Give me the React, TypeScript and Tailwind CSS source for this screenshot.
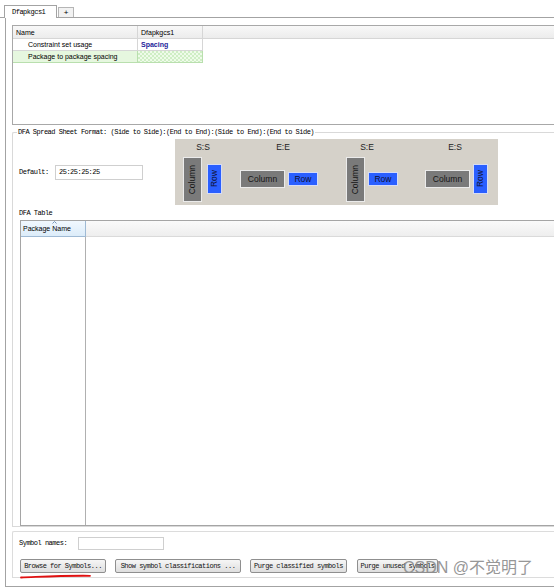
import React from "react";

const MONO = "font-['Liberation_Mono',monospace] text-[7px] tracking-[-0.5px]";
const SANS = "font-['Liberation_Sans',Arial,sans-serif]";

function ColumnBox({ vertical, className }: { vertical?: boolean; className: string }) {
  return (
    <div
      className={`absolute flex items-center justify-center bg-[#7a7a7a] border border-[#ebebeb] text-[#151515] text-[8.5px] leading-none ${SANS} ${className}`}
    >
      <span className={vertical ? "[writing-mode:vertical-rl] rotate-180" : ""}>Column</span>
    </div>
  );
}

function RowBox({ vertical, className }: { vertical?: boolean; className: string }) {
  return (
    <div
      className={`absolute flex items-center justify-center bg-[#2a5fff] border border-[#d6dcf5] text-[#101030] text-[8.5px] leading-none ${SANS} ${className}`}
    >
      <span className={vertical ? "[writing-mode:vertical-rl] rotate-180" : ""}>Row</span>
    </div>
  );
}

function Label({ text, className }: { text: string; className: string }) {
  return (
    <div className={`absolute top-[3px] w-[40px] text-center text-[8.5px] leading-[10px] text-[#222] ${SANS} ${className}`}>
      {text}
    </div>
  );
}

function Diagram() {
  return (
    <div className="relative w-[323px] h-[66px] bg-[#d5d1c9] shrink-0">
      <Label text="S:S" className="left-[8px]" />
      <Label text="E:E" className="left-[88px]" />
      <Label text="S:E" className="left-[172px]" />
      <Label text="E:S" className="left-[260px]" />
      <ColumnBox vertical className="left-[8px] top-[18px] w-[19px] h-[45px]" />
      <RowBox vertical className="left-[32px] top-[25px] w-[15px] h-[30px]" />
      <ColumnBox className="left-[65px] top-[31px] w-[45px] h-[18px]" />
      <RowBox className="left-[113px] top-[33px] w-[30px] h-[14px]" />
      <ColumnBox vertical className="left-[171px] top-[18px] w-[19px] h-[45px]" />
      <RowBox className="left-[193px] top-[33px] w-[30px] h-[14px]" />
      <ColumnBox className="left-[250px] top-[31px] w-[45px] h-[18px]" />
      <RowBox vertical className="left-[298px] top-[25px] w-[15px] h-[30px]" />
    </div>
  );
}

function Btn({ text, className }: { text: string; className: string }) {
  return (
    <div
      className={`h-[14px] flex items-center justify-center rounded-[2px] border border-[#8f8f8f] bg-gradient-to-b from-[#f6f6f6] to-[#dedede] leading-none text-[#111] ${MONO} ${className}`}
    >
      {text}
    </div>
  );
}

export default function App() {
  return (
    <div className="relative w-[554px] h-[587px] overflow-hidden bg-white text-black">
      {/* tab bar */}
      <div className="flex items-end h-[18px] pl-[4px] border-b border-[#a3a3a3]">
        <div
          className={`h-[13px] w-[53px] -mb-px border border-b-0 border-[#a3a3a3] bg-white flex items-center pl-[7px] leading-none ${MONO}`}
        >
          Dfapkgcs1
        </div>
        <div
          className={`ml-[1px] h-[10px] w-[16px] border border-b-0 border-[#b5b5b5] bg-[#f2f2f2] flex items-center justify-center text-[8px] leading-none ${SANS}`}
        >
          +
        </div>
      </div>

      {/* main frame */}
      <div className="ml-[5px] h-[569px] w-[560px] border-l border-b border-[#a3a3a3] flex flex-col pl-[6px] pt-[7px]">
        {/* property table box */}
        <div className={`h-[100px] border border-[#a8a8a8] flex flex-col text-[7px] leading-none ${SANS}`}>
          <div className="flex h-[13px] bg-gradient-to-b from-[#f8f8f8] to-[#ececec] border-b border-[#d6d6d6]">
            <div className="w-[125px] border-r border-[#d6d6d6] flex items-center pl-[3px]">Name</div>
            <div className="w-[65px] border-r border-[#d6d6d6] flex items-center pl-[3px]">Dfapkgcs1</div>
            <div className="flex-1" />
          </div>
          <div className="flex h-[12px]">
            <div className="w-[125px] border-r border-b border-[#d6d6d6] flex items-center pl-[15px]">Constraint set usage</div>
            <div className="w-[65px] border-r border-b border-[#d6d6d6] flex items-center pl-[3px] font-bold text-[#23239a]">
              Spacing
            </div>
          </div>
          <div className="flex h-[12px]">
            <div className="w-[125px] border-r border-b border-[#b9dfae] bg-[#e6f7df] flex items-center pl-[15px]">
              Package to package spacing
            </div>
            <div className="w-[65px] border-r border-b border-[#b9dfae] bg-[#e8f8e2] bg-[image:repeating-conic-gradient(#cfeec5_0%_25%,#eefbe9_0%_50%)] bg-[length:4px_4px]" />
          </div>
        </div>

        {/* DFA group box */}
        <div className="relative mt-[7px] h-[395px] border-l border-t border-b border-[#d9d9d9] rounded-tl-[2px] flex flex-col pt-[6px]">
          <div className={`absolute left-[4px] -top-[5px] bg-white px-[1px] leading-[9px] ${MONO}`}>
            DFA Spread Sheet Format: (Side to Side):(End to End):(Side to End):(End to Side)
          </div>
          <div className="flex items-center pl-[6px]">
            <div className={`w-[36px] leading-none ${MONO}`}>Default:</div>
            <div
              className={`w-[88px] h-[15px] border border-[#cfcfcf] flex items-center pl-[3px] leading-none ${MONO}`}
            >
              25:25:25:25
            </div>
            <div className="ml-[32px]">
              <Diagram />
            </div>
          </div>
          <div className={`mt-[4px] pl-[6px] h-[8px] leading-[8px] ${MONO}`}>DFA Table</div>
          <div className="mt-[3px] ml-[7px] h-[306px] border border-[#a5a5a5] flex flex-col">
            <div className={`flex h-[16px] text-[7px] leading-none ${SANS}`}>
              <div className="relative w-[65px] border-r border-b border-[#9fbad4] bg-gradient-to-b from-[#f1f8fe] to-[#dcecf9] flex items-center pl-[2px]">
                Package Name
                <svg className="absolute left-[31px] top-[0px]" width="5" height="3" viewBox="0 0 5 3">
                  <path d="M0.5 2.5 L2.5 0.5 L4.5 2.5" fill="none" stroke="#5a7fa8" strokeWidth="0.8" />
                </svg>
              </div>
              <div className="flex-1 border-b border-[#dadada] bg-gradient-to-b from-[#fafafa] to-[#eeeeee]" />
            </div>
            <div className="flex-1 flex">
              <div className="w-[65px] border-r border-[#b0b0b0]" />
              <div className="flex-1" />
            </div>
          </div>
        </div>

        {/* bottom group box */}
        <div className="mt-[4px] h-[47px] border-l border-t border-b border-[#dcdcdc] rounded-tl-[2px] flex flex-col pt-[5px]">
          <div className="flex items-center pl-[6px]">
            <div className={`w-[59px] leading-none ${MONO}`}>Symbol names:</div>
            <div className="w-[86px] h-[13px] border border-[#cfcfcf]" />
          </div>
          <div className="flex mt-[9px] pl-[7px]">
            <Btn text="Browse for Symbols..." className="w-[86px]" />
            <Btn text="Show symbol classifications ..." className="ml-[9px] w-[126px]" />
            <Btn text="Purge classified symbols" className="ml-[9px] w-[97px]" />
            <Btn text="Purge unused symbols" className="ml-[10px] w-[81px]" />
          </div>
        </div>
      </div>

      {/* red annotation */}
      <svg className="absolute left-[18px] top-[572px]" width="80" height="8" viewBox="0 0 80 8">
        <path d="M3 5.5 C 20 5, 40 3.5, 72 3.8" fill="none" stroke="#e01010" strokeWidth="1.8" strokeLinecap="round" />
      </svg>

      {/* watermark */}
      <div
        className={`absolute left-[403px] top-[558px] text-[16px] leading-[20px] text-[#8c8c8c] opacity-90 font-['Liberation_Sans','Noto_Sans_CJK_SC',sans-serif]`}
      >
        CSDN @不觉明了
      </div>
    </div>
  );
}
